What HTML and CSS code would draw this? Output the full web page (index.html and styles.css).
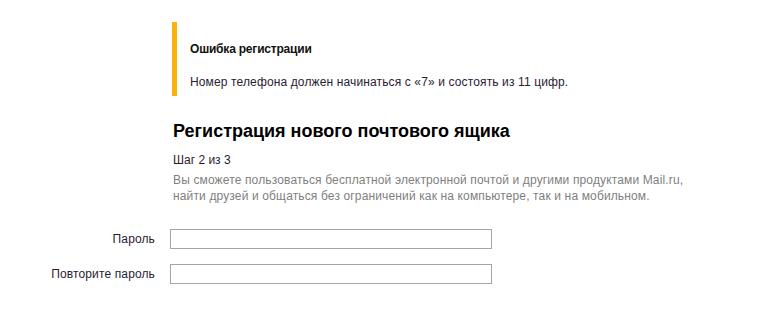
FILE: index.html
```html
<!DOCTYPE html>
<html lang="ru">
<head>
  <meta charset="UTF-8" />
  <title>Регистрация нового почтового ящика</title>
  <link rel="stylesheet" href="styles.css">
</head>
<body>
  <div class="page">
    <div class="error-box">
      <div class="error-title">Ошибка регистрации</div>
      <div class="error-text">Номер телефона должен начинаться с «7» и состоять из 11 цифр.</div>
    </div>

    <div class="intro">
      <h1 class="form-title">Регистрация нового почтового ящика</h1>
      <div class="step">Шаг 2 из 3</div>
      <p class="description">Вы сможете пользоваться бесплатной электронной почтой и другими продуктами Mail.ru,<br>найти друзей и общаться без ограничений как на компьютере, так и на мобильном.</p>
    </div>

    <form class="reg-form">
      <div class="row">
        <label class="row-label" for="password">Пароль</label>
        <input class="field" type="password" id="password" name="password">
      </div>
      <div class="row">
        <label class="row-label" for="password_repeat">Повторите пароль</label>
        <input class="field" type="password" id="password_repeat" name="password_repeat">
      </div>
    </form>
  </div>
</body>
</html>
```

FILE: styles.css
```css
body {
  font-family: "Liberation Sans", Arial, sans-serif;
  background: #fff;
  color: #333;
  margin: 0;
  padding: 0;
}

.page {
  padding-top: 22px;
}

.error-box {
  margin-left: 172px;
  border-left: 5px solid #f8b30d;
  padding: 20px 0 0 13px;
  height: 54px;
}

.error-title {
  font-size: 12px;
  font-weight: bold;
  letter-spacing: -0.2px;
  color: #111;
  line-height: 14px;
}

.error-text {
  font-size: 12px;
  letter-spacing: 0.13px;
  line-height: 16px;
  margin-top: 18px;
  color: #2b1b33;
}

.intro {
  margin-left: 173px;
  padding-top: 24px;
}

.form-title {
  font-size: 18px;
  font-weight: bold;
  color: #000;
  margin: 0;
  line-height: 22px;
}

.step {
  font-size: 12px;
  line-height: 16px;
  margin-top: 10px;
  color: #2b1b33;
}

.description {
  font-size: 12px;
  letter-spacing: 0.14px;
  line-height: 16px;
  color: #7f7f7f;
  margin: 4px 0 0;
}

.reg-form {
  margin-top: 25px;
}

.row {
  display: grid;
  grid-template-columns: 155px 322px;
  column-gap: 15px;
  align-items: center;
  margin-bottom: 15px;
}

.row-label {
  text-align: right;
  font-size: 12px;
  letter-spacing: 0.13px;
  color: #2b1b33;
}

.field {
  box-sizing: border-box;
  height: 20px;
  width: 322px;
  margin: 0;
  border: 1px solid #a5a5a5;
  padding: 2px 4px;
  font-size: 12px;
}
```
